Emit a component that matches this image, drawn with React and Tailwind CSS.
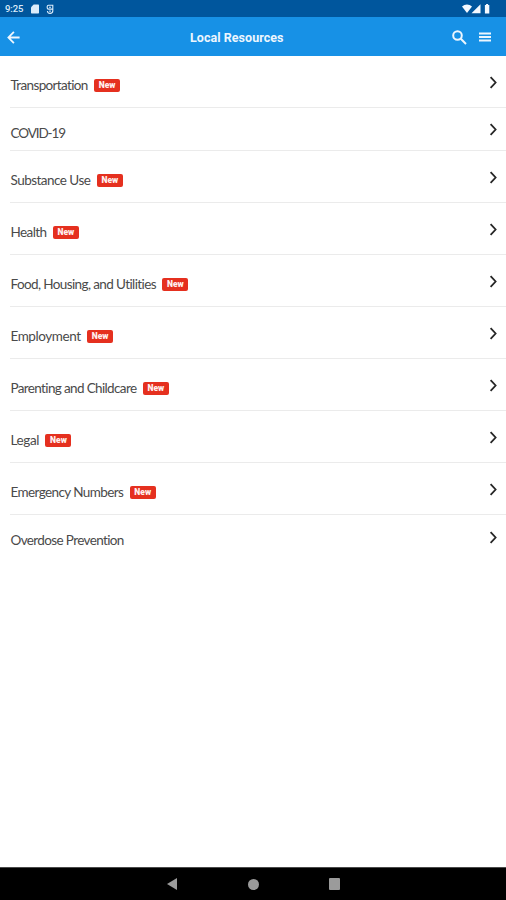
const RESOURCES = [
  { name: 'Transportation', isNew: true, spacing: 'tracking-[-0.65px]' },
  { name: 'COVID-19', spacing: 'tracking-[-1.1px]' },
  { name: 'Substance Use', isNew: true, spacing: 'tracking-[-0.53px]' },
  { name: 'Health', isNew: true, spacing: 'tracking-[-0.6px]' },
  { name: 'Food, Housing, and Utilities', isNew: true, spacing: 'tracking-[-0.61px]' },
  { name: 'Employment', isNew: true, spacing: 'tracking-[-0.43px]' },
  { name: 'Parenting and Childcare', isNew: true, spacing: 'tracking-[-0.64px]' },
  { name: 'Legal', isNew: true, spacing: 'tracking-[-0.4px]' },
  { name: 'Emergency Numbers', isNew: true, spacing: 'tracking-[-0.6px]' },
  { name: 'Overdose Prevention', spacing: 'tracking-[-0.63px]' },
]

function StatusBar() {
  return (
    <div className="h-[17px] shrink-0 bg-[#00569d] flex items-center justify-between pl-[5px] pr-[15px] text-[#dcecfa]">
      <div className="flex items-center pt-px">
        <span className="w-[26px] text-[9.5px] leading-none font-medium tracking-[-0.1px]">9:25</span>
        <svg width="8" height="10" viewBox="0 0 9 10" fill="currentColor">
          <path d="M3 0h5.2a.8.8 0 0 1 .8.8v8.4a.8.8 0 0 1-.8.8H.8a.8.8 0 0 1-.8-.8V3z" />
        </svg>
        <svg className="ml-[7px]" width="8" height="10" viewBox="0 0 8 10" fill="none" stroke="currentColor" strokeWidth="1.1">
          <path d="M6.8 1.2H2.6A1.4 1.4 0 0 0 1.2 2.6v1.2a1.3 1.3 0 0 0 1.3 1.3h4.3zM6.8 5.1v1.7A2.6 2.6 0 0 1 4.2 9.4 2.7 2.7 0 0 1 1.4 7" />
          <path d="M3 3.2h2M3.2 7.1h1.6" />
        </svg>
      </div>
      <svg className="mt-px" width="29" height="10" viewBox="0 0 29 10" fill="#f4f9ff">
        <path d="M0 2.4C2.8-.3 7.2-.3 10 2.4L5 9z" />
        <path d="M18.5 .3v9h-9z" />
        <path d="M22.900 .9h1.200V0h2v.9h1.200v8.700h-4.400z" />
      </svg>
    </div>
  )
}

function AppBar() {
  return (
    <header className="h-[39px] shrink-0 bg-[#1791e6] flex items-center text-[#edf6fe]">
      <svg className="ml-[7px] mt-px" width="13" height="13" viewBox="0 0 13 13" fill="none" stroke="currentColor" strokeWidth="1.8">
        <path d="M6.900 .8 1.400 6.500l5.500 5.700M1.600 6.500h11" />
      </svg>
      <h1 className="ml-[170px] mt-[2px] w-[94px] whitespace-nowrap text-[12.5px] leading-4 font-bold tracking-[0.05px]">
        Local Resources
      </h1>
      <svg className="ml-[168px] mt-px" width="15" height="15" viewBox="0 0 15 15" fill="none" stroke="currentColor" strokeWidth="2">
        <circle cx="5.500" cy="5.500" r="4.300" />
        <path d="m8.800 8.800 5.200 5.200" />
      </svg>
      <svg className="ml-[12px] mt-px" width="12" height="10" viewBox="0 0 12 10" stroke="currentColor" strokeWidth="2">
        <path d="M0 1.500h12M0 5h12M0 8.500h12" />
      </svg>
    </header>
  )
}

function NewBadge() {
  return (
    <span className="ml-[6.5px] h-[13px] w-[26px] rounded-[2px] bg-[#e5301f] text-center text-[8.5px] leading-[13px] font-black text-[#fff1ef]">
      New
    </span>
  )
}

function ResourceRow({ name, isNew, spacing }) {
  return (
    <li className={`ml-[10px] flex items-center justify-between border-b border-[#ebebeb] pl-[0.5px] last:border-b-0 ${isNew ? 'h-[52px]' : 'h-[43px]'}`}>
      <div className="flex items-center pt-[7px]">
        <span className={`whitespace-nowrap font-['Lato'] text-[13.5px] leading-4 text-[#4a4a4a] ${spacing}`}>{name}</span>
        {isNew && <NewBadge />}
      </div>
      <svg className="mr-[8px] mt-[1.5px]" width="9" height="13" viewBox="0 0 9 13" fill="none" stroke="#262626" strokeWidth="1.8">
        <path d="m1.600 1.200 5 5.300-5 5.300" />
      </svg>
    </li>
  )
}

function NavBar() {
  return (
    <nav className="h-[33px] shrink-0 bg-black border-t border-[#4a4a4a] flex items-center justify-center gap-[70px]">
      <svg width="11" height="12" viewBox="0 0 11 12" fill="#9b9b9b">
        <path d="M10 0v12L0 6z" />
      </svg>
      <span className="size-[11px] rounded-full bg-[#9b9b9b]" />
      <span className="h-[12px] w-[11px] rounded-[1px] bg-[#9b9b9b]" />
    </nav>
  )
}

export default function App() {
  return (
    <div className="flex h-[900px] w-[506px] flex-col overflow-hidden bg-white font-['Roboto',sans-serif]">
      <StatusBar />
      <AppBar />
      <ul className="flex-1">
        {RESOURCES.map((item) => (
          <ResourceRow key={item.name} {...item} />
        ))}
      </ul>
      <NavBar />
    </div>
  )
}
